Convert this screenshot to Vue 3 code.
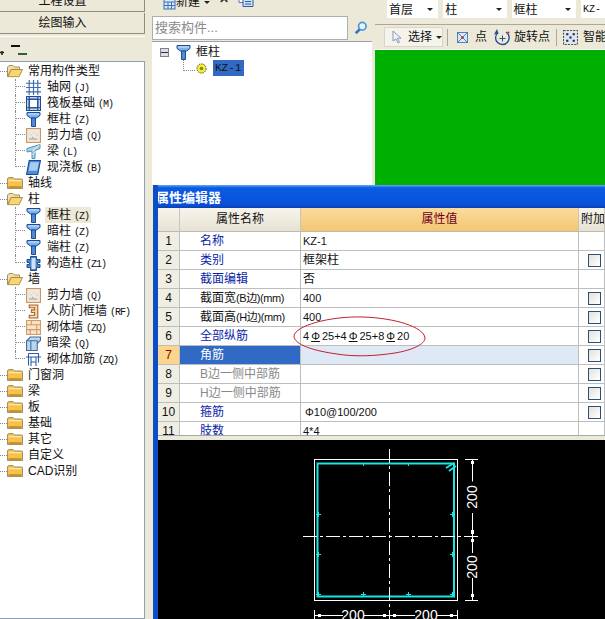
<template>
  <svg class="sprite" aria-hidden="true">
    <symbol id="i-open" viewBox="0 0 16 14">
      <path d="M.5 12.500V3L2 1.500h4L7.500 3h5v2.500H4.500L.5 12.500z" fill="#f6dc9a" stroke="#8a7a55" stroke-width=".8"/>
      <path d="M.8 12.700 4.200 5.500h11.300l-3.400 7.200z" fill="#f8d56e" stroke="#9a7f3c" stroke-width=".8"/>
    </symbol>
    <symbol id="i-closed" viewBox="0 0 16 14">
      <path d="M.5 12.500V2.500L2 1.500h4l1.500 1.500h7.500l.5 1v8.500z" fill="#f2c44e" stroke="#8a7a55" stroke-width=".8"/>
      <path d="M1.500 4.200h13v1H1.500z" fill="#fff3c4"/>
      <path d="M1.500 10h13v2h-13z" fill="#cf9420"/>
    </symbol>
    <symbol id="i-grid" viewBox="0 0 14 14">
      <path d="M0 3h14M0 7h14M0 11h14M3 0v14M7 0v14M11 0v14" stroke="#3b6cb4" stroke-width="1.100" fill="none"/>
    </symbol>
    <symbol id="i-raft" viewBox="0 0 14 14">
      <rect x=".5" y=".5" width="13" height="13" fill="#cfe0f5" stroke="#1d4c94"/>
      <rect x="3" y="3" width="8" height="8" fill="#fff" stroke="#1d4c94"/>
      <path d="M0 3h14M0 11h14M3 0v14M11 0v14" stroke="#1d4c94"/>
    </symbol>
    <symbol id="i-column" viewBox="0 0 14 15">
      <path d="M.5.500h13v3l-3.500 2.500H4L.5 3.500z" fill="#7fb2e8" stroke="#1c4f96"/>
      <path d="M5 6h4v8.500H5z" fill="#4f8ad0" stroke="#1c4f96"/>
      <path d="M1.500 1.500h11v1h-11z" fill="#d5e6f8"/>
    </symbol>
    <symbol id="i-wall" viewBox="0 0 14 14">
      <rect x=".5" y=".5" width="13" height="13" fill="#efe6dc" stroke="#c9956a"/>
      <path d="M3 10l1-1 1 1 1-2 2 2 1-1 2 2H3z" fill="#b9b4ac"/>
      <path d="M4 6h1v1H4zM7 4h1v1H7zM10 6h1v1h-1z" fill="#c4beb4"/>
    </symbol>
    <symbol id="i-beam" viewBox="0 0 14 15">
      <path d="M.5 4.500 13.500.5v4l-5 2v8h-3V7L.5 8z" fill="#a9d3ea" stroke="#4f8fb8"/>
      <path d="M6 7l7-6M6 11l3-4" stroke="#e6f3fa"/>
    </symbol>
    <symbol id="i-slab" viewBox="0 0 14 14">
      <path d="M3 .5h10.500L11 13.500H.5z" fill="#4f8ad8" stroke="#184a96"/>
      <path d="M4 2h8l-1.600 8H2.500z" fill="#a9cdf2"/>
    </symbol>
    <symbol id="i-struct" viewBox="0 0 14 15">
      <path d="M4 .5h6v3h3.500v3H11v2h2.500v3H10v3H4v-3H.5v-3H3v-2H.5v-3H4z" fill="#4f86c6" stroke="#1c4f96"/>
      <path d="M5 2h4v11H5z" fill="#cfe2f6"/>
    </symbol>
    <symbol id="i-door" viewBox="0 0 14 14">
      <path d="M3 1h8v12H3v-2.500h5V8H5V5.500h3V3.500H3z" fill="#f3d7a8" stroke="#a8632a"/>
    </symbol>
    <symbol id="i-brick" viewBox="0 0 14 14">
      <rect x=".5" y=".5" width="13" height="13" fill="#f7e3c8" stroke="#d19a66"/>
      <path d="M0 4.500h14M0 9h14M5 .5v4M10 4.500V9M4 9v5M10 9v5" stroke="#d19a66"/>
    </symbol>
    <symbol id="i-hbeam" viewBox="0 0 14 14">
      <path d="M.5 4.500 4 1h9.500v3l-3 3v6.500H.5z" fill="#bcd6ee" stroke="#44699c"/>
      <path d="M.5 4.500h10V7M4.500 4.500v9" fill="none" stroke="#44699c"/>
    </symbol>
    <symbol id="i-rebar" viewBox="0 0 15 15">
      <path d="M2.500 1.500h10v9M2.500 1.500v12M0 5h15M5 5v9M10 5v9M5 10h5" fill="none" stroke="#2c5da8" stroke-width="1.100"/>
    </symbol>
    <symbol id="i-new" viewBox="0 0 14 14">
      <rect x="2" y="3" width="11" height="10" fill="#d9e8f8" stroke="#3f6fb5"/>
      <path d="M2 6h11M6 6v7M9.500 6v7M2 9.500h11" stroke="#3f6fb5"/>
      <path d="M0 1h3v3H0z" fill="#e7b73f"/>
    </symbol>
    <symbol id="i-copy" viewBox="0 0 16 14">
      <path d="M1 .5h9v9H1z" fill="#fff" stroke="#4f7fb8"/>
      <path d="M5 3.500h10v10H5z" fill="#cfe0f5" stroke="#2c5da8"/>
      <path d="M7 6h6M7 8.500h6M7 11h6" stroke="#2c5da8"/>
    </symbol>
    <symbol id="i-gear" viewBox="0 0 12 12">
      <circle cx="6" cy="6" r="5" fill="#f6ee38" stroke="#3b3b10" stroke-dasharray="1.500 1"/>
      <circle cx="6" cy="6" r="2" fill="#8a8428"/>
    </symbol>
  </svg>

  <div class="screen">
    <aside class="left">
      <div class="nav-btn cut"><span>工程设置</span></div>
      <div class="nav-btn">绘图输入</div>
      <div class="tree-bar">
        <svg class="tree-tools" viewBox="0 0 30 14">
          <path d="M0 9.500h4M2 8v4" stroke="#1a2a1a" stroke-width="1.500"/>
          <path d="M11 3h9" stroke="#111" stroke-width="2"/>
          <path d="M18 11h9" stroke="#2e5e3e" stroke-width="2"/>
        </svg>
      </div>
      <div class="tree">
        <template v-for="(n, i) in tree" :key="i">
          <div class="row">
            <span class="stub"></span>
            <svg class="folder"><use :href="n.open ? '#i-open' : '#i-closed'" /></svg>
            <span class="label">{{ n.name }}</span>
          </div>
          <div
            v-for="(c, j) in n.kids"
            :key="j"
            class="row"
          >
            <span class="twig" :class="{ last: j === n.kids.length - 1 }"></span>
            <svg class="icon"><use :href="'#i-' + c.icon" /></svg>
            <span class="label kid" :class="{ hot: c.hot }">{{ c.name }}<small v-if="c.code">{{ c.code }}</small></span>
          </div>
        </template>
      </div>
    </aside>

    <div class="splitter"></div>

    <main class="work">
      <div class="top">
        <section class="mid">
          <div class="mid-bar">
            <svg class="bar-ico"><use href="#i-new" /></svg>
            <span>新建</span><i class="caret"></i>
            <span class="close-x">✕</span>
            <svg class="bar-ico copy"><use href="#i-copy" /></svg>
          </div>
          <div class="search-row">
            <div class="search">搜索构件...</div>
            <svg class="lens" viewBox="0 0 16 16">
              <circle cx="9.500" cy="6" r="4.300" fill="#e8f3fb" stroke="#4f9ad8" stroke-width="2"/>
              <path d="M6.500 9.500 2 14" stroke="#2f78c0" stroke-width="3"/>
            </svg>
          </div>
          <div class="comp-tree">
            <div class="comp-row">
              <span class="expander"></span>
              <svg class="icon"><use href="#i-column" /></svg>
              <span class="comp-name">框柱</span>
            </div>
            <div class="comp-row sub">
              <span class="comp-twig"></span>
              <svg class="gear"><use href="#i-gear" /></svg>
              <span class="comp-sel">KZ-1</span>
            </div>
          </div>
        </section>

        <section class="right">
          <div class="combo-bar">
            <div class="combo w54">首层<i class="caret"></i></div>
            <div class="combo w67">柱<i class="caret"></i></div>
            <div class="combo w68">框柱<i class="caret"></i></div>
            <div class="combo rest">KZ-</div>
          </div>
          <div class="tool-bar">
            <div class="pick">
              <svg class="arrow" viewBox="0 0 10 14"><path d="M1 1v10l3-2 2 4 1.500-.8-2-4H9z" fill="#eef3fa" stroke="#8a9ab5"/></svg>
              <span>选择</span><i class="caret"></i>
            </div>
            <b class="sep"></b>
            <svg class="tool" viewBox="0 0 13 13">
              <rect x=".5" y=".5" width="12" height="12" fill="#d8e6f6" stroke="#3f6fb5"/>
              <path d="M1 1l11 11M12 1 1 12" stroke="#3f6fb5"/>
              <circle cx="6.500" cy="6.500" r="1.500" fill="#d02020"/>
            </svg>
            <span class="tool-text">点</span>
            <svg class="tool rot" viewBox="0 0 17 17">
              <path d="M4 3.500a6.800 6.800 0 1 0 8-.5" fill="none" stroke="#27508f" stroke-width="1.400"/>
              <path d="M3 0l1.500 4.500L0 5.500z" fill="#27508f"/>
              <path d="M8.500 6.500v6M5.500 9.500h6" stroke="#27508f"/>
              <circle cx="14.500" cy="3.500" r="1" fill="#d02020"/>
            </svg>
            <span class="tool-text tight">旋转点</span>
            <b class="sep two"></b>
            <svg class="tool smart" viewBox="0 0 14 14">
              <rect x=".5" y=".5" width="13" height="13" fill="#dbe7f3" stroke="#555" stroke-dasharray="2 1"/>
              <path d="M3 3h2v2H3zM9 3h2v2H9zM3 9h2v2H3zM9 9h2v2H9zM6 6h2v2H6z" fill="#223"/>
            </svg>
            <span class="tool-text smart-text">智能</span>
          </div>
          <div class="green"></div>
        </section>
      </div>

      <section class="dialog">
        <div class="title">属性编辑器</div>
        <div class="table-wrap">
          <div class="grid">
            <div class="hd corner"></div>
            <div class="hd">属性名称</div>
            <div class="hd val-hd">属性值</div>
            <div class="hd extra">附加</div>
            <template v-for="(r, i) in rows" :key="i">
              <div class="no" :class="{ cur: r.sel }">{{ i + 1 }}</div>
              <div class="name" :class="[r.tone, { sel: r.sel }]">{{ r.name }}<small v-if="r.unit">{{ r.unit }}</small></div>
              <div class="val" :class="{ selv: r.sel, pad: r.pad, cjk: r.cjk }">
                <template v-if="r.rebar">
                  4<u>Φ</u>25+4<u>Φ</u>25+8<u>Φ</u>20
                </template>
                <template v-else>{{ r.value }}</template>
              </div>
              <div class="chk"><span v-if="r.check" class="box"></span></div>
            </template>
          </div>
          <svg class="ring" viewBox="0 0 136 46">
            <path d="M3 22C4 12 38 2 72 3c32 1 61 10 62 21 0 6-12 12-30 15-20 3-40 4-58 1C24 37 3 31 3 22z" fill="none" stroke="#c02030"/>
          </svg>
        </div>
        <div class="cad-gap"></div>
        <svg class="cad" viewBox="158 440 447 179" preserveAspectRatio="xMinYMin slice">
          <rect x="314.500" y="459.500" width="143" height="141" fill="none" stroke="#fff"/>
          <rect x="317.500" y="463.500" width="136.500" height="133" fill="none" stroke="#19e6e6" stroke-width="2"/>
          <path d="M389.500 449v170" stroke="#fff" stroke-dasharray="14 3 3 3"/>
          <path d="M303 536.500h177" stroke="#fff" stroke-dasharray="14 3 3 3"/>
          <path d="M446 468l8-5M449 471l7-5" stroke="#19e6e6" stroke-width="2"/>
          <path d="M316 514.500h5M318.500 512v5M316 554.500h5M318.500 552v5M450 514.500h5M452.500 512v5M450 554.500h5M452.500 552v5M361 594.500h5M363.500 592v5M406 594.500h5M408.500 592v5M316 594.500h5M318.500 592v5M450 594.500h5M452.500 592v5M363.500 464v2M408.500 464v2" stroke="#19e6e6"/>
          <path d="M465 459.500h13M465 536.500h13M465 600.500h13M472.500 459.500v22M472.500 513v40M472.500 578v22" stroke="#fff"/>
          <path d="M471 461h3v3h-3zM471 530h3v4h-3zM471 539h3v3h-3zM471 594h3v3h-3z" fill="#fff"/>
          <path d="M314.500 610v9M389.500 610v9M457.500 610v9M315 615.500h28M364 615.500h51M437 615.500h20" stroke="#fff"/>
          <path d="M318 614h3v3h-3zM383 614h3v3h-3zM393 614h3v3h-3zM450 614h3v3h-3z" fill="#fff"/>
          <text class="dim" x="353" y="620" text-anchor="middle">200</text>
          <text class="dim" x="426" y="620" text-anchor="middle">200</text>
          <text class="dim" transform="translate(477 497) rotate(-90)" text-anchor="middle">200</text>
          <text class="dim" transform="translate(477 567) rotate(-90)" text-anchor="middle">200</text>
        </svg>
      </section>
    </main>
  </div>
</template>

<script setup>
const tree = [
  { name: '常用构件类型', open: true, kids: [
    { name: '轴网', code: '(J)', icon: 'grid' },
    { name: '筏板基础', code: '(M)', icon: 'raft' },
    { name: '框柱', code: '(Z)', icon: 'column' },
    { name: '剪力墙', code: '(Q)', icon: 'wall' },
    { name: '梁', code: '(L)', icon: 'beam' },
    { name: '现浇板', code: '(B)', icon: 'slab' }
  ] },
  { name: '轴线', kids: [] },
  { name: '柱', open: true, kids: [
    { name: '框柱', code: '(Z)', icon: 'column', hot: true },
    { name: '暗柱', code: '(Z)', icon: 'column' },
    { name: '端柱', code: '(Z)', icon: 'column' },
    { name: '构造柱', code: '(Z1)', icon: 'struct' }
  ] },
  { name: '墙', open: true, kids: [
    { name: '剪力墙', code: '(Q)', icon: 'wall' },
    { name: '人防门框墙', code: '(RF)', icon: 'door' },
    { name: '砌体墙', code: '(ZQ)', icon: 'brick' },
    { name: '暗梁', code: '(Q)', icon: 'hbeam' },
    { name: '砌体加筋', code: '(ZQ)', icon: 'rebar' }
  ] },
  { name: '门窗洞', kids: [] },
  { name: '梁', kids: [] },
  { name: '板', kids: [] },
  { name: '基础', kids: [] },
  { name: '其它', kids: [] },
  { name: '自定义', kids: [] },
  { name: 'CAD识别', kids: [] }
]

const rows = [
  { name: '名称', value: 'KZ-1', tone: 'blue' },
  { name: '类别', value: '框架柱', tone: 'blue', check: true, cjk: true },
  { name: '截面编辑', value: '否', tone: 'blue', cjk: true },
  { name: '截面宽', unit: '(B边)(mm)', value: '400', check: true },
  { name: '截面高', unit: '(H边)(mm)', value: '400', check: true },
  { name: '全部纵筋', rebar: true, tone: 'blue', check: true },
  { name: '角筋', value: '', sel: true, check: true },
  { name: 'B边一侧中部筋', value: '', tone: 'grey', check: true },
  { name: 'H边一侧中部筋', value: '', tone: 'grey', check: true },
  { name: '箍筋', value: 'Φ10@100/200', tone: 'blue', check: true, pad: true },
  { name: '肢数', value: '4*4', tone: 'blue' }
]
</script>

<style>
html, body { margin: 0; overflow: hidden; background: #ece9d8; }
</style>

<style scoped>
.sprite { display: none; }
.screen {
  display: flex;
  width: 605px;
  height: 619px;
  overflow: hidden;
  background: #ece9d8;
  font: 12px/16px "Liberation Sans", "Noto Sans CJK SC", sans-serif;
  color: #111;
}

/* left nav */
.left { width: 145px; flex: none; display: flex; flex-direction: column; }
.nav-btn {
  height: 20px;
  line-height: 20px;
  text-align: center;
  margin-bottom: 2px;
  padding-right: 19px;
  border-right: 1px solid #8f8d80;
  border-bottom: 1px solid #8f8d80;
  width: 125px;
}
.nav-btn.cut { height: 11px; overflow: hidden; line-height: 2px; margin-bottom: 1px; }
.nav-btn.cut span { display: block; }
.tree-bar {
  height: 24px;
  display: flex;
  align-items: center;
  border-top: 1px solid #fff;
}
.tree-tools { width: 30px; height: 14px; margin-top: 1px; }
.tree {
  flex: 1;
  background: #fff;
  border: 1px solid #8da0b5;
  border-left: 0;
  padding-top: 1px;
}
.row { display: flex; align-items: center; height: 16px; white-space: nowrap; }
.stub { width: 7px; border-top: 1px dotted #888; flex: none; }
.folder { width: 16px; height: 14px; flex: none; }
.label { margin-left: 5px; }
.label.kid { margin-left: 4px; padding: 0 2px; }
.label.kid.hot { background: #ece9d8; }
.label small { font: 10px "Liberation Mono", monospace; letter-spacing: -1px; margin-left: 3px; }
.twig { width: 10px; height: 16px; margin-left: 15px; border-left: 1px dotted #888; flex: none; box-sizing: border-box; }
.twig::after { content: ""; display: block; margin-top: 7px; border-top: 1px dotted #888; }
.twig.last { height: 8px; align-self: flex-start; }
.icon { width: 15px; height: 15px; flex: none; margin-left: 1px; }

.splitter { width: 7px; flex: none; }

.work { flex: 1; min-width: 0; display: flex; flex-direction: column; }
.top { display: flex; height: 185px; flex: none; }

/* middle panel */
.mid { width: 223px; flex: none; display: flex; flex-direction: column; }
.mid-bar { height: 15px; box-sizing: border-box; padding-bottom: 5px; display: flex; align-items: flex-end; flex: none; overflow: hidden; }
.bar-ico { width: 14px; height: 14px; margin-left: 10px; flex: none; }
.caret { display: inline-block; width: 0; height: 0; margin-left: 4px; border: 3px solid transparent; border-top: 3px solid #222; border-bottom: 0; }
.mid-bar .caret { margin-bottom: 6px; }
.close-x { margin: 0 0 3px 9px; font-weight: bold; color: #333; }
.bar-ico.copy { width: 16px; margin: 0 0 3px 9px; }
.search-row { height: 26px; display: flex; align-items: center; flex: none; }
.search {
  width: 196px;
  height: 24px;
  line-height: 22px;
  box-sizing: border-box;
  padding-left: 2px;
  background: #fff;
  border: 1px solid #a8b0b4;
  color: #8a8a8a;
  font-size: 13px;
}
.lens { width: 14px; height: 14px; margin-left: 6px; }
.comp-tree {
  width: 220px;
  flex: 1;
  box-sizing: border-box;
  background: #fff;
  border-top: 1px solid #98a2a8;
  padding: 2px 0 0 8px;
}
.comp-row { display: flex; align-items: center; height: 16px; }
.expander { width: 9px; height: 9px; box-sizing: border-box; border: 1px solid #808080; background: linear-gradient(#dde 45%, #333 45%, #333 55%, #dde 55%); }
.comp-row .icon { margin-left: 7px; }
.comp-name { margin-left: 5px; }
.comp-twig { width: 12px; height: 16px; margin: -8px 0 0 23px; border-left: 1px dotted #888; border-bottom: 1px dotted #888; box-sizing: border-box; transform: translateY(-1px); }
.gear { width: 11px; height: 11px; margin-left: 1px; }
.comp-sel { margin-left: 6px; width: 31px; background: #316ac5; font: 11px/16px "Liberation Mono", monospace; padding-left: 2px; box-sizing: border-box; }

/* right panel */
.right { flex: 1; min-width: 0; display: flex; flex-direction: column; }
.combo-bar { height: 18px; display: flex; gap: 5px; padding-left: 12px; flex: none; overflow: hidden; }
.combo { background: #fff; display: flex; align-items: center; justify-content: space-between; padding: 1px 4px 0 2px; box-sizing: border-box; }
.combo .caret { margin-right: 1px; }
.w54 { width: 54px; }
.w67 { width: 67px; }
.w68 { width: 68px; }
.rest { flex: 1; font: 10px "Liberation Mono", monospace; }
.tool-bar {
  height: 24px;
  margin-top: 6px;
  display: flex;
  align-items: center;
  padding-left: 9px;
  border-top: 1px solid #aca899;
  border-bottom: 1px solid #fff;
  flex: none;
  white-space: nowrap;
  overflow: hidden;
}
.pick { width: 59px; height: 20px; flex: none; display: flex; align-items: center; background: #f4f3ec; border: 1px solid #d8d6c8; box-sizing: border-box; padding-left: 7px; }
.arrow { width: 10px; height: 14px; margin-right: 6px; }
.sep { width: 1px; height: 17px; background: #aca899; margin: 0 9px 0 4px; flex: none; }
.sep.two { margin: 0 6px; }
.tool { width: 11px; height: 11px; flex: none; }
.tool.rot { width: 17px; height: 17px; margin-left: 7px; }
.tool.smart { width: 15px; height: 15px; }
.tool-text { margin-left: 7px; }
.tool-text.tight { margin-left: 3px; }
.tool-text.smart-text { margin-left: 5px; }
.green { flex: 1; background: #00b000; }

/* dialog */
.dialog { flex: 1; min-height: 0; display: flex; flex-direction: column; border-left: 5px solid #0a4fc8; background: #ece9d8; overflow: hidden; margin-left: 1px; }
.title {
  height: 23px;
  flex: none;
  margin-left: -5px;
  padding-left: 3px;
  background: linear-gradient(#6aa8f4, #0a5ce4 12%, #0a50d8 88%, #0a3fa8);
  color: #fff;
  font-weight: bold;
  font-size: 13px;
  line-height: 25px;
}
.table-wrap { height: 227px; flex: none; position: relative; overflow: hidden; background: #fff; }
.grid {
  display: grid;
  grid-template-columns: 22px 121px 278px 26px;
  grid-template-rows: 24px repeat(11, 19px);
}
.hd {
  background: linear-gradient(#f6f4ec, #e6e2d4);
  border-right: 1px solid #c8c6bc;
  border-bottom: 1px solid #bdbbb0;
  box-sizing: border-box;
  text-align: center;
  line-height: 23px;
  white-space: nowrap;
  overflow: hidden;
}
.val-hd { background: linear-gradient(#fbdb9a, #f4c674); color: #700020; }
.extra { text-align: left; padding-left: 2px; }
.no, .name, .val, .chk {
  box-sizing: border-box;
  border-bottom: 1px solid #bdbdbd;
  border-right: 1px solid #bdbdbd;
  line-height: 19px;
  white-space: nowrap;
  overflow: hidden;
}
.no { background: #f0eee2; text-align: center; font-size: 12px; }
.no.cur { background: #fbd58c; color: #900000; }
.name { padding-left: 20px; }
.name small { font-size: 11px; letter-spacing: -.4px; }
.name.blue { color: #0a1ea8; }
.name.grey { color: #888; }
.name.sel { background: #316ac5; color: #fff; }
.val { padding-left: 2px; font-size: 11px; }
.val.cjk { font-size: 12px; }
.val.pad { padding-left: 4px; }
.val u { margin: 0 2px; }
.selv { background: #dfe8f5; }
.chk { display: flex; align-items: center; justify-content: center; }
.box { width: 13px; height: 13px; box-sizing: border-box; border: 1px solid #2c4f78; background: linear-gradient(135deg, #e2e2da, #fff); margin-left: 6px; }
.ring { position: absolute; left: 133px; top: 106px; width: 136px; height: 46px; pointer-events: none; }
.cad-gap { height: 5px; flex: none; border-top: 1px solid #a0a8b0; box-sizing: border-box; }
.cad { display: block; flex: 1; min-height: 0; width: 447px; background: #000; }
.dim { font: 14px "Liberation Sans", sans-serif; fill: #fff; }
</style>
